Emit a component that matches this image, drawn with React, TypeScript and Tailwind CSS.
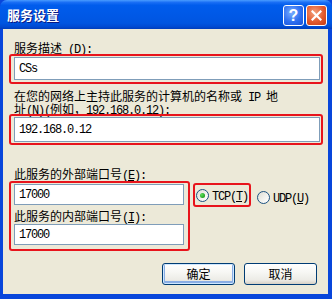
import React from "react";

const CJK = '"Noto Sans CJK SC", "Noto Sans", sans-serif';

function T({ s }: { s: string }) {
  const parts: { t: string; a: boolean }[] = [];
  for (const ch of s) {
    const a = ch.charCodeAt(0) < 128;
    const last = parts[parts.length - 1];
    if (last && last.a === a) last.t += ch;
    else parts.push({ t: ch, a });
  }
  return (
    <>
      {parts.map((p, i) =>
        p.a ? (
          <span
            key={i}
            className="whitespace-pre font-['Liberation_Mono',monospace] text-[12px] tracking-[-1.2px]"
          >
            {p.t}
          </span>
        ) : (
          <span key={i} className="font-['Noto_Sans_CJK_SC',sans-serif] text-[12px]">
            {p.t}
          </span>
        )
      )}
    </>
  );
}

function Label({ pre, key1, post }: { pre: string; key1: string; post: string }) {
  return (
    <>
      <T s={pre} />
      <span className="underline underline-offset-1">
        <T s={key1} />
      </span>
      <T s={post} />
    </>
  );
}

function Input({ value, w, h }: { value: string; w: string; h: string }) {
  return (
    <div
      className={`${w} ${h} flex items-center border border-[#7F9DB9] bg-white pl-[4px] text-black leading-[12px]`}
    >
      <T s={value} />
    </div>
  );
}

function Radio({ checked }: { checked: boolean }) {
  return (
    <div className="flex h-[13px] w-[13px] shrink-0 items-center justify-center rounded-full border border-[#1C5180] bg-[linear-gradient(135deg,#DCDCD4_0%,#F4F4F0_60%,#FFFFFF_100%)]">
      {checked && (
        <div className="h-[5px] w-[5px] rounded-full bg-[radial-gradient(circle_at_35%_35%,#5CE05C_0%,#21A121_70%,#1A8A1A_100%)]" />
      )}
    </div>
  );
}

function Button({ text, def }: { text: string; def?: boolean }) {
  return (
    <div
      className={`flex h-[22px] w-[73px] items-center justify-center rounded-[3px] border border-[#003C74] bg-[linear-gradient(to_bottom,#FFFFFF_0%,#F7F7F4_40%,#ECEBE6_80%,#D6D0C5_100%)] leading-[12px] text-black ${
        def ? "shadow-[inset_0_0_0_1px_#CEE7FF,inset_0_-1px_0_2px_#89ADE4]" : ""
      }`}
    >
      <T s={text} />
    </div>
  );
}

export default function App() {
  return (
    <div className="flex h-[299px] w-[332px] flex-col overflow-hidden bg-[#0846DB]" style={{ fontFamily: CJK }}>
      {/* Title bar */}
      <div className="relative flex h-[29px] shrink-0 items-center rounded-t-[7px] bg-[linear-gradient(to_bottom,#4A9CFF_0%,#1A6FF5_8%,#005CEC_18%,#0058E6_55%,#0055E0_80%,#004AD2_92%,#003DBA_100%)] pl-[7px]">
        <span className="font-['Noto_Sans_CJK_SC',sans-serif] text-[13px] font-bold leading-[13px] text-white [text-shadow:1px_1px_0_#0A1883]">
          服务设置
        </span>
        <div className="absolute left-[283px] top-[5px] flex h-[21px] w-[21px] items-center justify-center rounded-[3px] border border-white bg-[radial-gradient(circle_at_40%_35%,#7AAEFF_0%,#2E6FF0_55%,#1A52D8_100%)]">
          <span className="font-['Liberation_Sans',sans-serif] text-[16px] font-bold leading-[16px] text-white">?</span>
        </div>
        <div className="absolute left-[306px] top-[5px] flex h-[21px] w-[21px] items-center justify-center rounded-[3px] border border-white bg-[radial-gradient(circle_at_40%_35%,#F4A27E_0%,#E25A2E_55%,#C63A12_100%)]">
          <svg width="11" height="11" viewBox="0 0 11 11">
            <path d="M1.5 1.5 L9.5 9.5 M9.5 1.5 L1.5 9.5" stroke="white" strokeWidth="2.2" strokeLinecap="square" />
          </svg>
        </div>
      </div>

      {/* Body */}
      <div className="ml-[3px] mr-[4px] mb-[5px] flex flex-1 flex-col bg-[#ECE9D8] pt-[11px] text-black">
        <div className="pl-[11px] leading-[12px] h-[12px] whitespace-nowrap">
          <Label pre="服务描述 (" key1="D" post="):" />
        </div>
        <div className="mt-[2px] ml-[6px] h-[30px] w-[314px] rounded-[3px] border-2 border-[#E8141C] pl-[3px] pt-[1px]">
          <Input value="CSs" w="w-[306px]" h="h-[23px]" />
        </div>

        <div className="mt-[4px] pl-[11px] leading-[13px] whitespace-nowrap">
          <div className="h-[13px]">
            <T s="在您的网络上主持此服务的计算机的名称或 IP 地" />
          </div>
          <div className="h-[13px]">
            <Label pre="址(" key1="N" post=")(例如，192.168.0.12):" />
          </div>
        </div>
        <div className="ml-[6px] h-[31px] w-[314px] rounded-[3px] border-2 border-[#E8141C] pl-[3px] pt-[1px]">
          <Input value="192.168.0.12" w="w-[306px]" h="h-[25px]" />
        </div>

        <div className="mt-[21px] pl-[11px] h-[12px] leading-[12px] whitespace-nowrap">
          <Label pre="此服务的外部端口号(" key1="E" post="):" />
        </div>

        <div className="mt-[3px] ml-[6px] flex items-start">
          <div className="h-[70px] w-[181px] rounded-[3px] border-2 border-[#E8141C] pl-[3px] pt-[1px]">
            <Input value="17000" w="w-[170px]" h="h-[21px]" />
            <div className="mt-[3px] h-[12px] leading-[12px] whitespace-nowrap">
              <Label pre="此服务的内部端口号(" key1="I" post="):" />
            </div>
            <div className="mt-[4px]">
              <Input value="17000" w="w-[170px]" h="h-[21px]" />
            </div>
          </div>
          <div className="ml-[3px] mt-[2px] flex h-[24px] w-[58px] items-center gap-[3px] rounded-[3px] border-2 border-[#E8141C] pl-[1px]">
            <Radio checked />
            <div className="leading-[12px] whitespace-nowrap">
              <Label pre="TCP(" key1="T" post=")" />
            </div>
          </div>
          <div className="ml-[6px] mt-[8px] flex items-center gap-[3px]">
            <Radio checked={false} />
            <div className="leading-[12px] whitespace-nowrap">
              <Label pre="UDP(" key1="U" post=")" />
            </div>
          </div>
        </div>

        <div className="mt-[12px] flex justify-end gap-[9px] pr-[11px]">
          <Button text="确定" def />
          <Button text="取消" />
        </div>
      </div>
    </div>
  );
}
